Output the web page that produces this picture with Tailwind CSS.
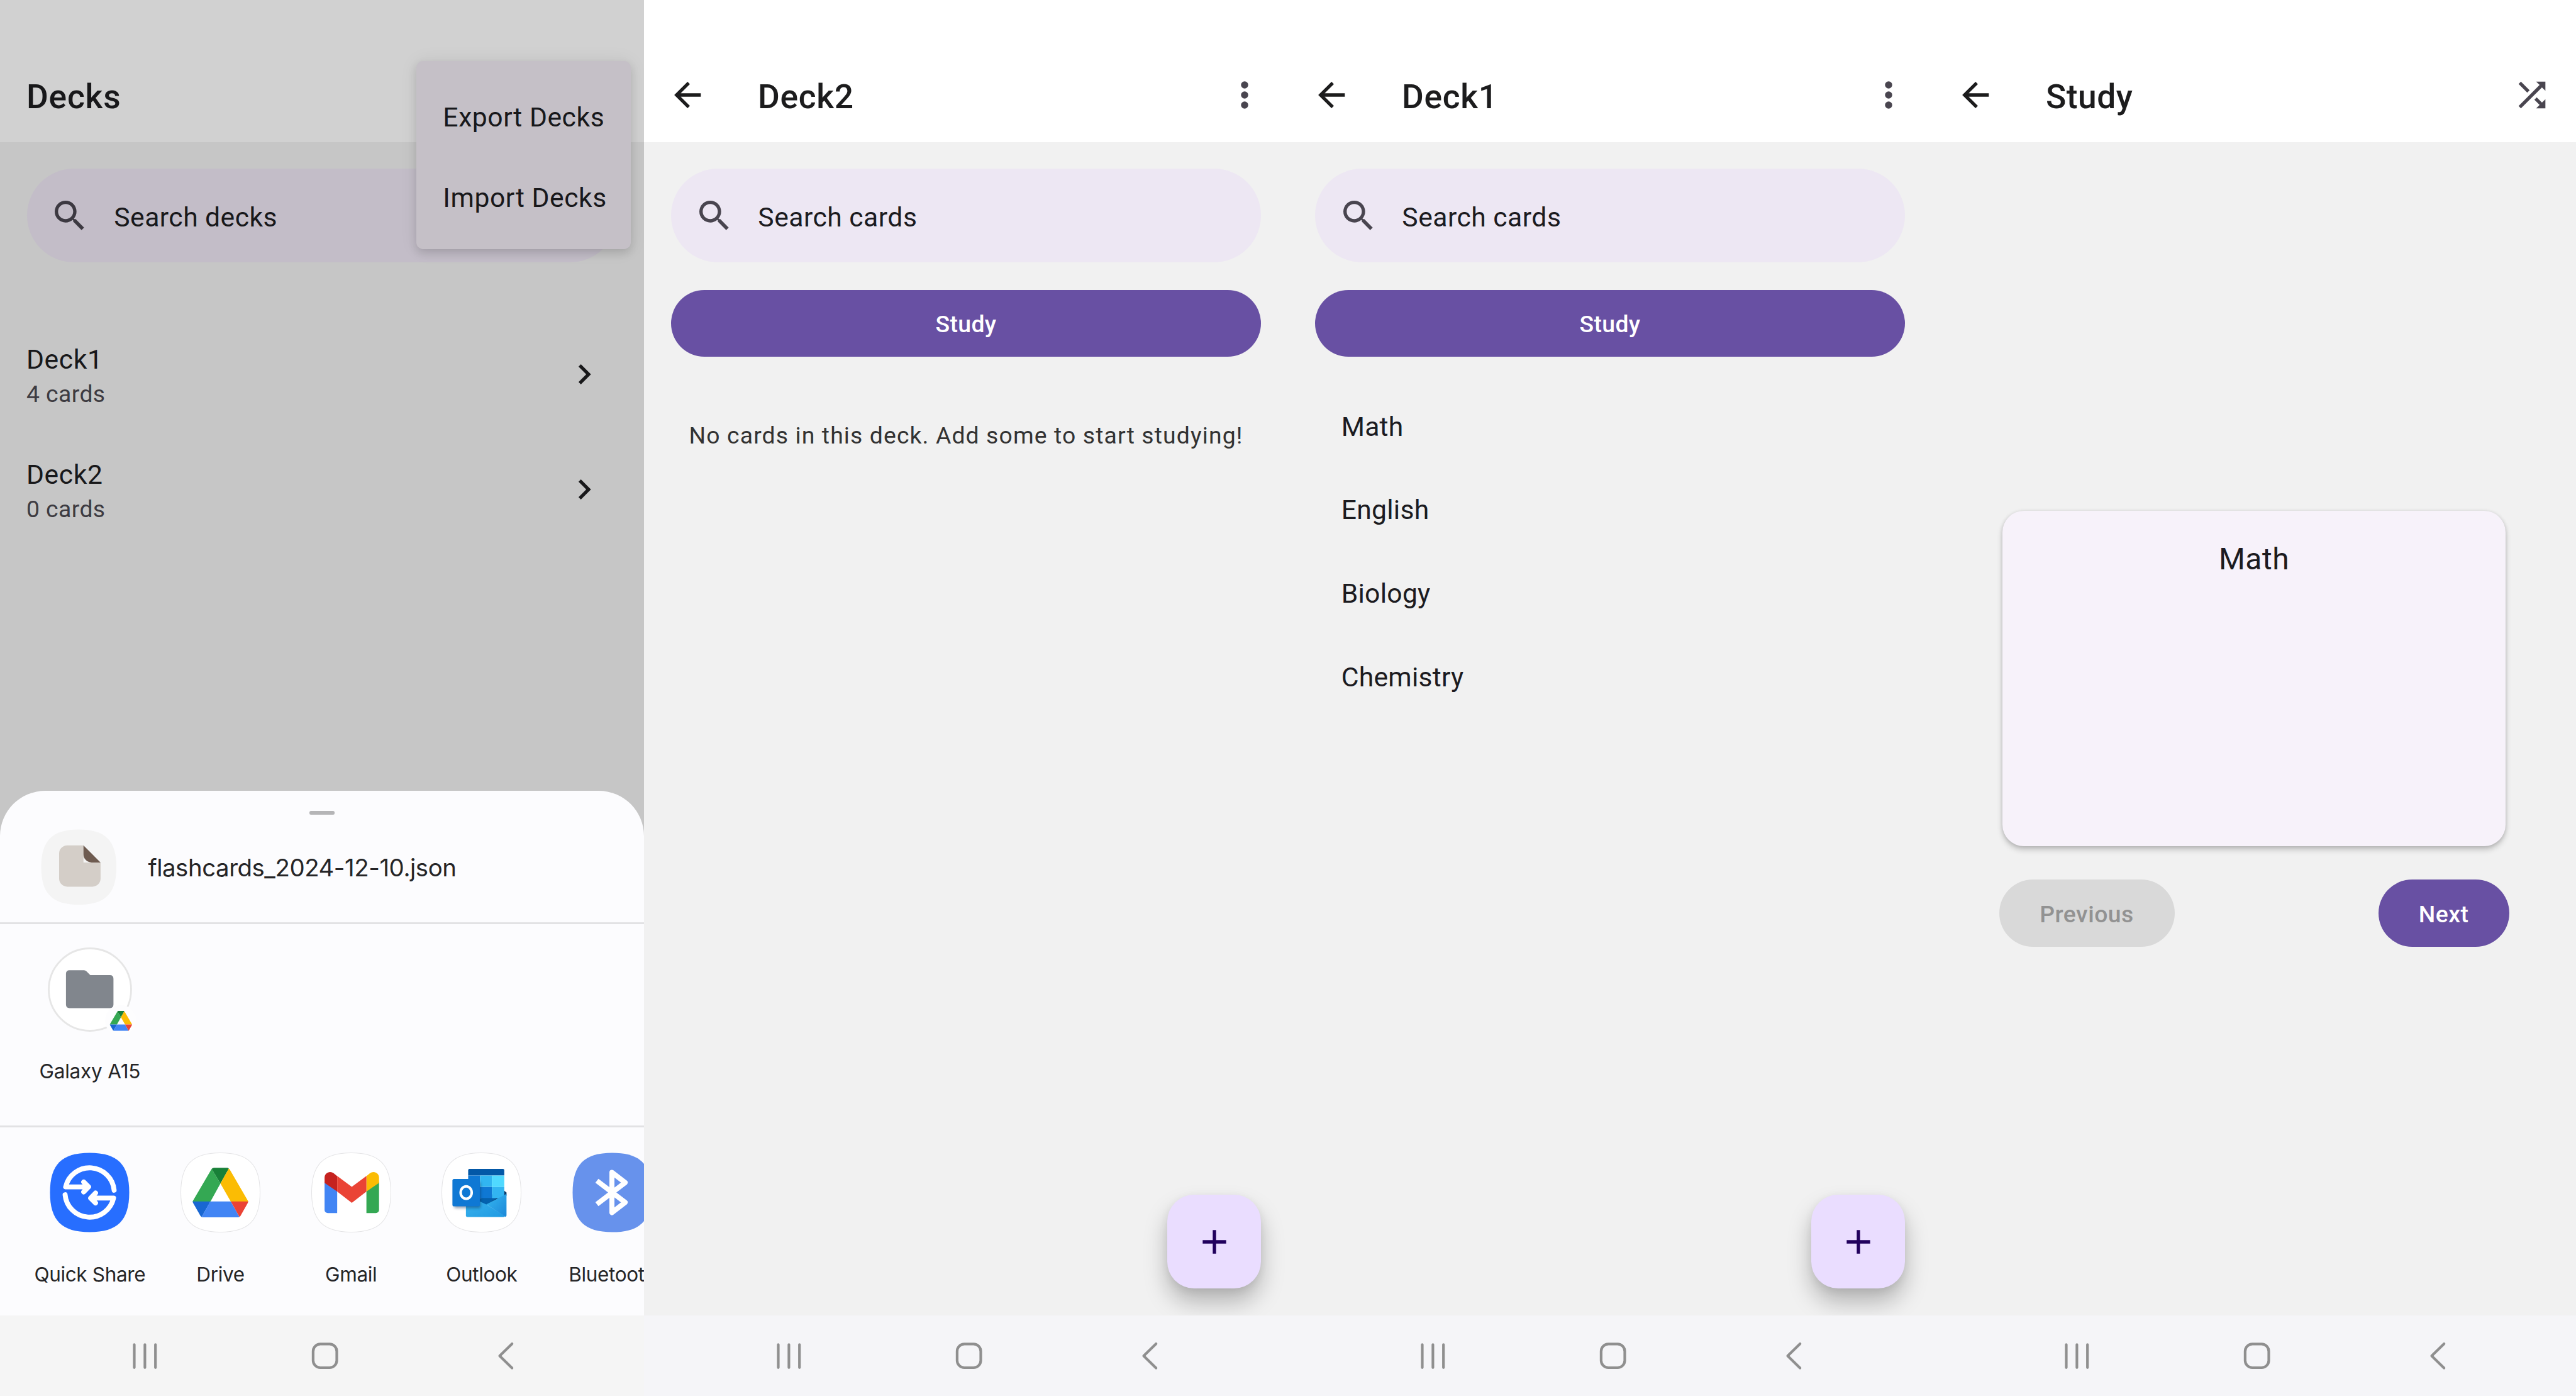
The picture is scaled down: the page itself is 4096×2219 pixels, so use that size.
<!DOCTYPE html>
<html lang="en">
<head>
<meta charset="utf-8">
<title>Flashcards</title>
<script src="https://cdn.jsdelivr.net/npm/@tailwindcss/browser@4"></script>
</head>
<body class="w-[4096px] h-[2219px] overflow-hidden bg-[#f1f1f1] font-['Roboto',sans-serif] text-[#1c1b1f]">

<svg class="hidden">
  <symbol id="back" viewBox="0 0 24 24"><path fill="currentColor" d="M20 11v2H8l5.5 5.5-1.42 1.42L4.16 12l7.92-7.92L13.5 5.5 8 11h12z"/></symbol>
  <symbol id="dots" viewBox="0 0 24 24"><g fill="currentColor"><circle cx="12" cy="6" r="2.15"/><circle cx="12" cy="12" r="2.15"/><circle cx="12" cy="18" r="2.15"/></g></symbol>
  <symbol id="search" viewBox="0 0 24 24"><path fill="currentColor" d="M9.5 3A6.5 6.5 0 0 1 16 9.5c0 1.61-.59 3.09-1.56 4.23l.27.27h.79l5 5-1.5 1.5-5-5v-.79l-.27-.27A6.516 6.516 0 0 1 9.5 16a6.5 6.5 0 0 1 0-13m0 2C7 5 5 7 5 9.5S7 14 9.5 14 14 12 14 9.5 12 5 9.5 5z"/></symbol>
  <symbol id="chevron" viewBox="0 0 24 24"><path fill="currentColor" d="M8.59 16.58 13.17 12 8.59 7.41 10 6l6 6-6 6-1.41-1.42z"/></symbol>
  <symbol id="shuffle" viewBox="0 0 24 24"><path fill="currentColor" d="M14.83 13.41 13.42 14.82 16.55 17.95 14.5 20H20V14.5L17.96 16.54 14.83 13.41M14.5 4 16.54 6.04 4 18.59 5.41 20 17.96 7.46 20 9.5V4M10.59 9.17 5.41 4 4 5.41 9.17 10.58 10.59 9.17z"/></symbol>
  <symbol id="plus" viewBox="0 0 24 24"><path fill="currentColor" d="M19 13h-6v6h-2v-6H5v-2h6V5h2v6h6v2z"/></symbol>
  <symbol id="squircle" viewBox="0 0 100 100"><path d="M50 .4C85 .4 99.6 15 99.6 50S85 99.6 50 99.6.4 85 .4 50 15 .4 50 .4z"/></symbol>
  <symbol id="drive" viewBox="15 18.5 70 63">
    <path fill="#34a853" d="M39 20.5 15.8 60q-.5.8-.6 1.4h22.3L50 38.8z"/>
    <path fill="#188038" d="M39 20.5q1.2-1.5 3-1.5h16.5q1.2 0 2 1L50 38.8z"/>
    <path fill="#fbbc04" d="M60.5 20q.8.4 1.3 1.4L84.2 60q.6.9.6 1.4H63L50 38.8z"/>
    <path fill="#1967d2" d="M15.2 61.3h22.3L26.5 80.7q-1-.5-1.6-1.5L15.7 63z"/>
    <path fill="#4285f4" d="M37.4 61.3H63l10.8 19.3q-.8.6-2 .6H28.5q-1.2 0-2-.5z"/>
    <path fill="#ea4335" d="M63 61.3h21.8q0 .8-.6 1.8l-9.1 16.3q-.5.9-1.3 1.2z"/>
  </symbol>
  <symbol id="nav" viewBox="0 0 1024 128">
    <g fill="none" stroke="#8f8f8f" stroke-width="4.2" stroke-linecap="round" stroke-linejoin="round">
      <path d="M213.5 46.3v36.5M230.4 46.3v36.5M247.2 46.3v36.5"/>
      <rect x="497.900" y="45.4" width="37.6" height="37.6" rx="11.5"/>
      <path d="M814.2 44.9 794.5 64.2 814.2 83.5"/>
    </g>
  </symbol>
</svg>

<main class="flex">

  <!-- Deck list with the share sheet open -->
  <section class="relative w-[1024px] h-[2219px] shrink-0 flex flex-col overflow-hidden bg-[#c6c6c6]">
    <header class="h-[226px] shrink-0 bg-[#d1d1d1] pt-[76px] pl-[42px] flex items-center">
      <h1 class="mt-[5px] text-[53.33px] font-medium leading-[64px] tracking-[0.8px] text-[#18181a]">Decks</h1>
    </header>
    <div class="mt-[42px] mx-[42.67px] h-[149.33px] shrink-0 rounded-full bg-[#c3bdc8] flex items-center pl-[36.5px]">
      <svg class="size-16 text-[#3c3941]"><use href="#search"/></svg>
      <span class="ml-[38.2px] mt-1 text-[42.67px] leading-[56px] tracking-[0.45px] text-[#18181b]">Search decks</span>
    </div>
    <ul class="mt-[85.7px] px-[42px]">
      <li class="h-[183px] flex items-start">
        <div class="flex-1 pt-[40px]">
          <p class="text-[42.67px] leading-[56px] tracking-[0.6px] text-[#18181a]">Deck1</p>
          <p class="text-[37.33px] leading-[54px] tracking-[0.4px] text-[#3d3b41]">4 cards</p>
        </div>
        <svg class="size-16 self-center mr-[21.4px] text-[#18181a]"><use href="#chevron"/></svg>
      </li>
      <li class="h-[183px] flex items-start">
        <div class="flex-1 pt-[40px]">
          <p class="text-[42.67px] leading-[56px] tracking-[0.6px] text-[#18181a]">Deck2</p>
          <p class="text-[37.33px] leading-[54px] tracking-[0.4px] text-[#3d3b41]">0 cards</p>
        </div>
        <svg class="size-16 self-center mr-[21.4px] text-[#18181a]"><use href="#chevron"/></svg>
      </li>
    </ul>

    <div class="absolute left-[661.7px] top-[97.3px] w-[341.3px] h-[298.7px] rounded-[10.7px] bg-[#c5c0c7] py-[21.33px] pl-[42.67px] shadow-[0_6px_14px_rgba(0,0,0,0.13),0_1px_30px_rgba(0,0,0,0.07)] text-[42.67px] tracking-[0.55px] text-[#18181b]">
      <p class="h-32 pt-[3px] leading-[128px]">Export Decks</p>
      <p class="h-32 pt-[3px] leading-[128px]">Import Decks</p>
    </div>

    <div class="absolute inset-x-0 bottom-32 h-[834px] rounded-t-[72px] bg-[#fcfcfe] flex flex-col font-['Inter',sans-serif] text-[#252527]">
      <div class="mt-[32.4px] mx-auto w-10 h-[6px] shrink-0 rounded-[2.5px] bg-[#b5b5b7]"></div>
      <div class="mt-[22.4px] h-[120.6px] shrink-0 flex items-center pl-[65.3px]">
        <svg class="size-[120.6px] shrink-0" viewBox="0 0 120.6 120.6">
          <use href="#squircle" width="120.6" height="120.6" fill="#f4f4f4"/>
          <path fill="#d4cec8" d="M42 25.7h25.7v27.2h27.2v25.5a13 13 0 0 1-13 13H42a13 13 0 0 1-13-13V38.7a13 13 0 0 1 13-13z"/>
          <path fill="#6e5b50" d="M67.7 25.7 94.9 52.9H80.7a13 13 0 0 1-13-13z"/>
        </svg>
        <p class="ml-[49.5px] mt-[2px] text-[38.4px] leading-[56px] tracking-[-0.45px]">flashcards_2024-12-10.json</p>
      </div>
      <div class="mt-[27.3px] h-[3px] shrink-0 bg-[#e2e2e4]"></div>
      <div class="h-[320.3px] shrink-0 pl-[39px] pt-[36.9px]">
        <div class="w-[207.7px] flex flex-col items-center">
          <svg class="w-[150px] h-[142px]" viewBox="0 0 150 142">
            <circle cx="75" cy="67" r="65.5" fill="#fff" stroke="#e6e6e6" stroke-width="2.8"/>
            <path fill="#81868d" d="M42.5 36.2h23.2q2.2 0 3.6 1.6l6.3 6.3h31.2q5.6 0 5.6 5.6v41.1q0 5.6-5.6 5.6H42.5q-5.6 0-5.6-5.6V41.8q0-5.6 5.6-5.6z"/>
            <circle cx="124" cy="116.5" r="24.8" fill="#fdfdfe"/>
            <use href="#drive" x="106.5" y="100.5" width="35.6" height="32.5"/>
          </svg>
          <p class="mt-[33px] text-[31.5px] leading-[44px] tracking-[-0.2px]">Galaxy A15</p>
        </div>
      </div>
      <div class="h-[3px] shrink-0 bg-[#e2e2e4]"></div>
      <div class="flex pl-[39px] pt-[40.3px] w-[1024px] overflow-hidden text-[31.5px] leading-[44px] tracking-[-0.35px]">
        <div class="w-[207.7px] shrink-0 flex flex-col items-center gap-[45px]">
          <svg class="size-[127px]" viewBox="0 0 100 100">
            <use href="#squircle" width="100" height="100" fill="#276eff"/>
            <g fill="none" stroke="#fff" stroke-width="6.2" stroke-linecap="round" stroke-linejoin="round">
              <path d="M80.7 47.2A30.8 30.8 0 0 0 20 43h28.5M42.6 36.9 48.7 43l-6.1 6.3"/>
              <path d="M19.3 52.8A30.8 30.8 0 0 0 80 57H51.5M57.4 63.1 51.3 57l6.1-6.3"/>
            </g>
          </svg>
          <span>Quick Share</span>
        </div>
        <div class="w-[207.7px] shrink-0 flex flex-col items-center gap-[45px]">
          <svg class="size-[127px]" viewBox="0 0 100 100">
            <use href="#squircle" width="100" height="100" fill="#fff" stroke="#e4e4e6" stroke-width=".8"/>
            <use href="#drive" x="15" y="18.5" width="70" height="63"/>
          </svg>
          <span>Drive</span>
        </div>
        <div class="w-[207.7px] shrink-0 flex flex-col items-center gap-[45px]">
          <svg class="size-[127px]" viewBox="0 0 100 100">
            <use href="#squircle" width="100" height="100" fill="#fff" stroke="#e4e4e6" stroke-width=".8"/>
            <path fill="#4285f4" d="M16.6 36.5 32.4 48.5v27.3H20.6a4 4 0 0 1-4-4z"/>
            <path fill="#34a853" d="M84.8 36.5 69 48.5v27.3h11.8a4 4 0 0 0 4-4z"/>
            <path fill="#c5221f" d="M32.4 29.5v19.4L16.6 38v-6.5c0-6.2 6.8-9.3 11.5-5.5z"/>
            <path fill="#fbbc04" d="M69 29.5v19.4L84.8 38v-6.5c0-6.2-6.8-9.3-11.5-5.5z"/>
            <path fill="#ea4335" d="M32.4 29.3 50.7 42.9 69 29.3v19.5L50.7 63 32.4 48.8z"/>
          </svg>
          <span>Gmail</span>
        </div>
        <div class="w-[207.7px] shrink-0 flex flex-col items-center gap-[45px]">
          <svg class="size-[127px]" viewBox="0 0 100 100">
            <defs>
              <linearGradient id="flap" x1="0" y1="0" x2="1" y2="1"><stop offset="0" stop-color="#35b8f1"/><stop offset="1" stop-color="#1b87d8"/></linearGradient>
              <linearGradient id="env" x1="0" y1="0" x2="1" y2="1"><stop offset="0" stop-color="#3cb4ee"/><stop offset="1" stop-color="#1f9ae2"/></linearGradient>
              <filter id="soft" x="-30%" y="-30%" width="160%" height="160%"><feGaussianBlur stdDeviation="1.5"/></filter>
            </defs>
            <use href="#squircle" width="100" height="100" fill="#fff" stroke="#e4e4e6" stroke-width=".8"/>
            <path fill="#0b3a68" d="M78 47.5 81.4 50v4L56 66l-15-6z"/>
            <path fill="#0358a7" d="M35 20.5h42a1.6 1.6 0 0 1 1.6 1.6v6.7H33.4v-6.7A1.6 1.6 0 0 1 35 20.5z"/>
            <path fill="#0f78d4" d="M33.4 28.8h14.9V43H63v14.3H33.4z"/>
            <path fill="#32b5f1" d="M48.3 28.8h14.8V43H48.3zM63.1 43h15.5v14.3H63.1z"/>
            <path fill="#50d9ff" d="M63.1 28.8h15.5V43H63.1z"/>
            <path fill="#0461ae" d="M40 57.3h29L56 65.5z"/>
            <path fill="url(#env)" d="M30.6 53 56 65l23.5 14.8q-.6 1-2 1h-45a1.9 1.9 0 0 1-1.9-1.9z"/>
            <path fill="url(#flap)" d="M81.4 51.8v27q0 1.3-1.2 1.7L56 65z"/>
            <rect x="16" y="37" width="33" height="32.5" rx="2" fill="#0a2c50" opacity=".45" filter="url(#soft)"/>
            <rect x="13.7" y="33" width="34.3" height="34.3" rx="2" fill="#0f78d4"/>
            <ellipse cx="30.9" cy="50.1" rx="6.9" ry="7.8" fill="none" stroke="#fff" stroke-width="3.2"/>
          </svg>
          <span>Outlook</span>
        </div>
        <div class="w-[207.7px] shrink-0 flex flex-col items-center gap-[45px]">
          <svg class="size-[127px]" viewBox="0 0 100 100">
            <use href="#squircle" width="100" height="100" fill="#6792ec"/>
            <path fill="none" stroke="#fff" stroke-width="6.3" stroke-linejoin="round" d="M30.8 35.3 66.2 62.4 49.6 75.2V24.8L66.2 37.6 30.8 64.7"/>
          </svg>
          <span>Bluetooth</span>
        </div>
      </div>
    </div>

    <footer class="mt-auto h-32 shrink-0 bg-[#f5f5f5]"><svg class="w-[1024px] h-32"><use href="#nav"/></svg></footer>
  </section>

  <!-- Empty deck -->
  <section class="w-[1024px] h-[2219px] shrink-0 flex flex-col">
    <header class="h-[226px] shrink-0 bg-white pt-[76px] pl-[36.7px] pr-[37.3px] flex items-center text-[#1c1c1d]">
      <svg class="size-16"><use href="#back"/></svg>
      <h1 class="ml-[80.3px] mt-[5px] flex-1 text-[53.33px] font-medium leading-[64px] tracking-[0.7px]">Deck2</h1>
      <svg class="size-16 text-[#49454f]"><use href="#dots"/></svg>
    </header>
    <div class="relative flex-1 overflow-hidden px-[42.67px] pt-[42px] flex flex-col">
      <div class="h-[149.33px] shrink-0 rounded-full bg-[#ede7f3] flex items-center pl-[37px]">
        <svg class="size-16 text-[#49454f]"><use href="#search"/></svg>
        <span class="ml-[37.7px] mt-1 text-[42.67px] leading-[56px] tracking-[0.48px]">Search cards</span>
      </div>
      <button class="mt-[43.3px] h-[106.67px] shrink-0 rounded-full bg-[#6850a3] text-white text-[37.33px] font-medium leading-[53px] tracking-[0.4px] pt-[3px]">Study</button>
      <p class="mt-[99px] text-center text-[37.33px] leading-[53px] tracking-[1.12px] whitespace-nowrap text-[#333]">No cards in this deck. Add some to start studying!</p>
      <button class="absolute right-[42.67px] bottom-[42.67px] size-[149.33px] rounded-[42.67px] bg-[#eaddff] text-[#21005d] flex items-center justify-center shadow-[0_22px_36px_rgba(0,0,0,0.25),0_4px_14px_rgba(0,0,0,0.07)]"><svg class="size-16"><use href="#plus"/></svg></button>
    </div>
    <footer class="h-32 shrink-0 bg-[#f5f5f8]"><svg class="w-[1024px] h-32"><use href="#nav"/></svg></footer>
  </section>

  <!-- Deck with cards -->
  <section class="w-[1024px] h-[2219px] shrink-0 flex flex-col">
    <header class="h-[226px] shrink-0 bg-white pt-[76px] pl-[36.7px] pr-[37.3px] flex items-center text-[#1c1c1d]">
      <svg class="size-16"><use href="#back"/></svg>
      <h1 class="ml-[80.3px] mt-[5px] flex-1 text-[53.33px] font-medium leading-[64px] tracking-[0.7px]">Deck1</h1>
      <svg class="size-16 text-[#49454f]"><use href="#dots"/></svg>
    </header>
    <div class="relative flex-1 overflow-hidden px-[42.67px] pt-[42px] flex flex-col">
      <div class="h-[149.33px] shrink-0 rounded-full bg-[#ede7f3] flex items-center pl-[37px]">
        <svg class="size-16 text-[#49454f]"><use href="#search"/></svg>
        <span class="ml-[37.7px] mt-1 text-[42.67px] leading-[56px] tracking-[0.48px]">Search cards</span>
      </div>
      <button class="mt-[43.3px] h-[106.67px] shrink-0 rounded-full bg-[#6850a3] text-white text-[37.33px] font-medium leading-[53px] tracking-[0.4px] pt-[3px]">Study</button>
      <ul class="mt-[44.5px] pl-[42px] text-[42.67px] leading-[132.7px] tracking-[0.25px]">
        <li>Math</li>
        <li>English</li>
        <li>Biology</li>
        <li>Chemistry</li>
      </ul>
      <button class="absolute right-[42.67px] bottom-[42.67px] size-[149.33px] rounded-[42.67px] bg-[#eaddff] text-[#21005d] flex items-center justify-center shadow-[0_22px_36px_rgba(0,0,0,0.25),0_4px_14px_rgba(0,0,0,0.07)]"><svg class="size-16"><use href="#plus"/></svg></button>
    </div>
    <footer class="h-32 shrink-0 bg-[#f5f5f8]"><svg class="w-[1024px] h-32"><use href="#nav"/></svg></footer>
  </section>

  <!-- Study mode -->
  <section class="w-[1024px] h-[2219px] shrink-0 flex flex-col">
    <header class="h-[226px] shrink-0 bg-white pt-[76px] pl-[36.7px] pr-[38.3px] flex items-center text-[#1c1c1d]">
      <svg class="size-16"><use href="#back"/></svg>
      <h1 class="ml-[80.3px] mt-[5px] flex-1 text-[53.33px] font-medium leading-[64px] tracking-[0.5px]">Study</h1>
      <svg class="size-16 text-[#49454f]"><use href="#shuffle"/></svg>
    </header>
    <div class="flex-1 flex flex-col items-center pt-[585.7px]">
      <div class="w-[800px] h-[533.33px] shrink-0 rounded-[34px] bg-[#f7f2fa] pt-[45px] text-center text-[48px] leading-[64px] tracking-[0.5px] shadow-[0_6px_10px_rgba(0,0,0,0.18),0_1px_6px_rgba(0,0,0,0.14)]">Math</div>
      <div class="mt-[53.33px] w-[811px] flex justify-between text-[37.33px] font-medium leading-[53px] tracking-[0.5px]">
        <button class="w-[279px] h-[106.67px] rounded-full bg-[#d9d9d9] text-[#929292] pt-[3px]">Previous</button>
        <button class="w-[208px] h-[106.67px] rounded-full bg-[#6850a3] text-white pt-[3px]">Next</button>
      </div>
    </div>
    <footer class="h-32 shrink-0 bg-[#f5f5f8]"><svg class="w-[1024px] h-32"><use href="#nav"/></svg></footer>
  </section>
</main>
</body>
</html>
